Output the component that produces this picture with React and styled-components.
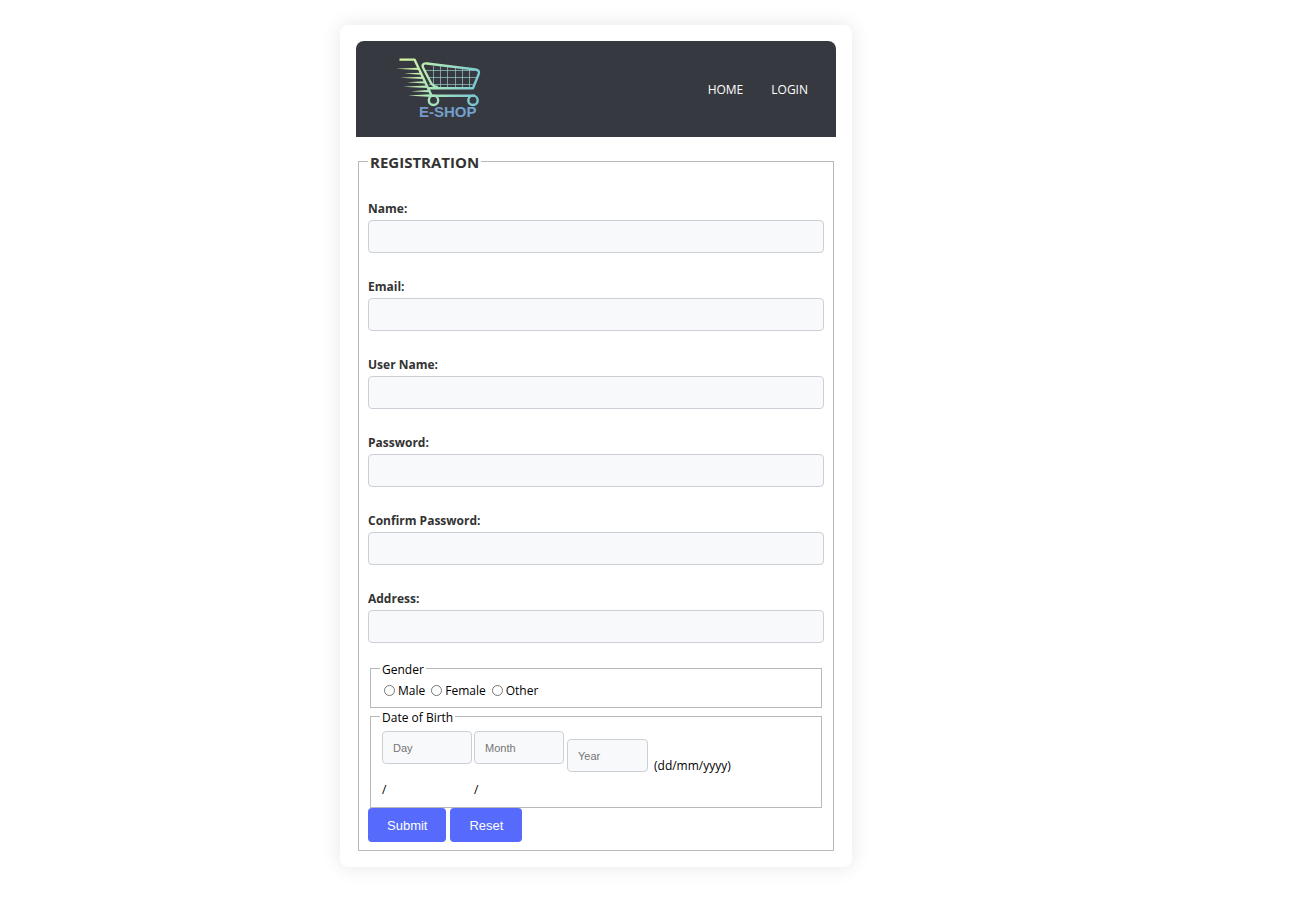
import React from "react";
import styled, { createGlobalStyle } from "styled-components";

const GlobalStyle = createGlobalStyle`
  *, *::before, *::after { box-sizing: border-box; }
  body {
    margin: 0;
    background: #fff;
    color: #000;
    font: 12px/18px "Open Sans", "Noto Sans", sans-serif;
  }
`;

const Page = styled.main`
  display: flex;
  justify-content: center;
  padding: 25px 103px 32px 0;
`;

const Card = styled.div`
  width: 100%;
  max-width: 512px;
  padding: 16px;
  border-radius: 8px;
  background: #fff;
  box-shadow: 0 0 20px rgba(0, 0, 0, 0.1);
`;

const Header = styled.header`
  display: flex;
  align-items: center;
  justify-content: space-between;
  height: 96px;
  padding: 0 28px 0 36px;
  border-radius: 8px 8px 0 0;
  background: #373940;
`;

const LogoLink = styled.a`
  display: block;
  height: 72px;
`;

const Nav = styled.nav`
  display: flex;
  gap: 28px;
  padding-top: 2px;
`;

const NavLink = styled.a`
  color: #fff;
  text-decoration: none;
`;

const Registration = styled.fieldset`
  min-width: 0;
  margin: 14px 2px 0;
  padding: 0 9px 8px;
  border: 1px solid #b9b9b9;
`;

const Title = styled.legend`
  padding: 1px 2px 0;
  color: #333;
  font-size: 15px;
  font-weight: 700;
  line-height: 20px;
`;

const Fields = styled.div`
  display: grid;
  gap: 24px;
  padding: 27px 0 17px;
`;

const Field = styled.div`
  display: grid;
  gap: 1px;
`;

const FieldLabel = styled.label`
  color: #333;
  font-weight: 700;
  line-height: 20px;
`;

const TextInput = styled.input`
  width: ${({ $width }) => $width || "100%"};
  height: 33px;
  padding: 0 10px;
  border: 1px solid #ccd0d6;
  border-radius: 4px;
  background: #f8f9fb;
  font: 11px "Liberation Sans", Arial, sans-serif;

  &::placeholder { color: #757575; }
`;

const Group = styled.fieldset`
  min-width: 0;
  margin: 0 2px;
  padding: ${({ $padding }) => $padding};
  border: 1px solid #b9b9b9;
`;

const GroupLegend = styled.legend`
  padding: 2px 2px 0;
  line-height: 15px;
`;

const Options = styled.div`
  display: flex;
  gap: 6px;
  padding-left: 4px;
`;

const Option = styled.label`
  display: flex;
  align-items: center;
  gap: 3px;
`;

const Radio = styled.input`
  width: 11px;
  height: 11px;
  margin: 0 0 2px;
`;

const DateRow = styled.div`
  display: flex;
  align-items: flex-start;
  gap: 2px;
  padding-left: 2px;
`;

const DatePart = styled.div`
  display: grid;
  gap: 17px;
`;

const YearPart = styled.div`
  display: flex;
  align-items: flex-end;
  gap: 6px;
  padding: 8px 0 0 1px;
  line-height: 12px;
`;

const Actions = styled.div`
  display: flex;
  gap: 4px;
`;

const Button = styled.button`
  height: 34px;
  padding: 0 19px;
  border: 0;
  border-radius: 4px;
  background: #566afb;
  color: #fff;
  font: 13px "Liberation Sans", Arial, sans-serif;
`;

const LogoText = styled.text`
  font: 700 15px "Liberation Sans", Arial, sans-serif;
`;

function Logo() {
  return (
    <svg width="96" height="72" viewBox="392 53 96 72" role="img" aria-label="E-Shop">
      <defs>
        <linearGradient id="cart" gradientUnits="userSpaceOnUse" x1="399" y1="66" x2="484" y2="88">
          <stop offset="0" stopColor="#dcf5a0" />
          <stop offset="0.45" stopColor="#a8e5bc" />
          <stop offset="1" stopColor="#72c3d6" />
        </linearGradient>
        <linearGradient id="name" x1="0" y1="0" x2="1" y2="0">
          <stop offset="0" stopColor="#7797c6" />
          <stop offset="1" stopColor="#6fa5cf" />
        </linearGradient>
      </defs>
      <path
        d="M433.500 66v20M440.500 66v21M447.500 67v20M455.500 68v19M462.500 69v18M469.500 70v17M425 70.500h50M427 77.500h49M429 84.500h44"
        fill="none" stroke="#9ccbc7" strokeWidth="1" opacity="0.7"
      />
      <g fill="none" stroke="url(#cart)" strokeWidth="2.400" strokeLinejoin="round">
        <path d="M399.500 59.600H414.500L431.500 95.500" />
        <path d="M438 87C434 87 432 85 430.500 82L423.500 68.500C421.500 65 423 63 427 63.500L475.500 69.500Q480 70.300 478.700 74L473 88.200H428.500" />
        <path d="M430 95.700H475" />
        <circle cx="433.500" cy="100.300" r="4.700" />
        <circle cx="473" cy="100.300" r="4.700" />
      </g>
      <path
        d="M396 68.700L418 67.800L419 70ZM404 73.600L420 72.800L421 74.800ZM400 77.700L422 76.700L423 79ZM407 82.200L424 81.200L425 83.400ZM403 86.700L426 85.600L427 88ZM411 91.200L428 90L429 92.200ZM408 95.500L430 94.200L431 97Z"
        fill="url(#cart)"
      />
      <LogoText x="419" y="117" fill="url(#name)">E-SHOP</LogoText>
    </svg>
  );
}

const fields = [
  { id: "name", label: "Name:", type: "text" },
  { id: "email", label: "Email:", type: "email" },
  { id: "username", label: "User Name:", type: "text" },
  { id: "password", label: "Password:", type: "password" },
  { id: "confirm", label: "Confirm Password:", type: "password" },
  { id: "address", label: "Address:", type: "text" },
];

export default function App() {
  return (
    <>
      <GlobalStyle />
      <Page>
        <Card>
          <Header>
            <LogoLink href="#home"><Logo /></LogoLink>
            <Nav>
              <NavLink href="#home">HOME</NavLink>
              <NavLink href="#login">LOGIN</NavLink>
            </Nav>
          </Header>
          <form onSubmit={(event) => event.preventDefault()}>
            <Registration>
              <Title>REGISTRATION</Title>
              <Fields>
                {fields.map(({ id, label, type }) => (
                  <Field key={id}>
                    <FieldLabel htmlFor={id}>{label}</FieldLabel>
                    <TextInput id={id} name={id} type={type} />
                  </Field>
                ))}
              </Fields>
              <Group $padding="5px 9px 7px">
                <GroupLegend>Gender</GroupLegend>
                <Options>
                  {["Male", "Female", "Other"].map((gender) => (
                    <Option key={gender}>
                      <Radio type="radio" name="gender" value={gender} />
                      {gender}
                    </Option>
                  ))}
                </Options>
              </Group>
              <Group $padding="6px 9px 8px">
                <GroupLegend>Date of Birth</GroupLegend>
                <DateRow>
                  {["Day", "Month"].map((part) => (
                    <DatePart key={part}>
                      <TextInput $width="90px" placeholder={part} aria-label={part} />
                      <span>/</span>
                    </DatePart>
                  ))}
                  <YearPart>
                    <TextInput $width="81px" placeholder="Year" aria-label="Year" />
                    <span>(dd/mm/yyyy)</span>
                  </YearPart>
                </DateRow>
              </Group>
              <Actions>
                <Button type="submit">Submit</Button>
                <Button type="reset">Reset</Button>
              </Actions>
            </Registration>
          </form>
        </Card>
      </Page>
    </>
  );
}
